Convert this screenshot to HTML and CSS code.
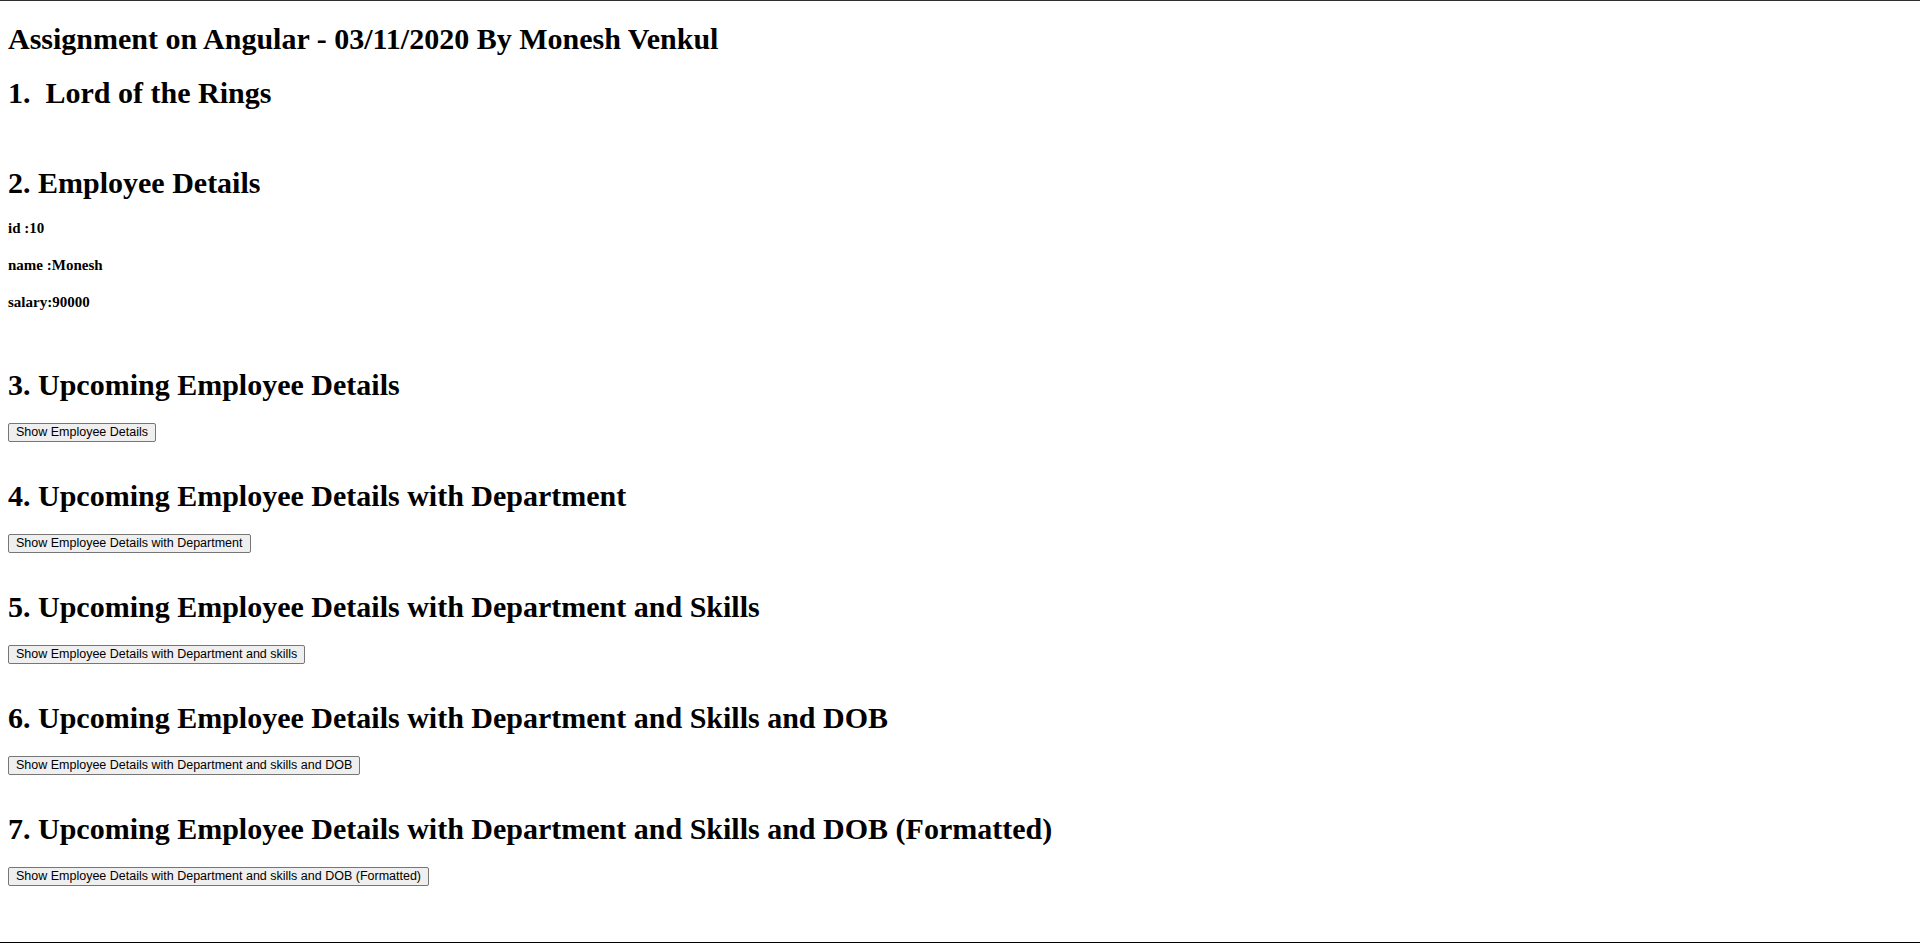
FILE: index.html
```html
<!DOCTYPE html>
<html lang="en">
<head>
<meta charset="utf-8">
<title>Assignment on Angular</title>
<link rel="stylesheet" href="styles.css">
</head>
<body>
<div class="page">
  <h1 class="title">Assignment on Angular - 03/11/2020 By Monesh Venkul</h1>
  <section class="block block-lotr">
    <h2 class="heading">1.&nbsp; Lord of the Rings</h2>
  </section>
  <section class="block block-emp">
    <h2 class="heading">2. Employee Details</h2>
    <div class="fields">
      <p class="field">id :10</p>
      <p class="field">name :Monesh</p>
      <p class="field">salary:90000</p>
    </div>
  </section>
  <section class="block block-first">
    <h2 class="heading">3. Upcoming Employee Details</h2>
    <button class="btn" type="button">Show Employee Details</button>
  </section>
  <section class="block block-next">
    <h2 class="heading">4. Upcoming Employee Details with Department</h2>
    <button class="btn" type="button">Show Employee Details with Department</button>
  </section>
  <section class="block block-next">
    <h2 class="heading">5. Upcoming Employee Details with Department and Skills</h2>
    <button class="btn" type="button">Show Employee Details with Department and skills</button>
  </section>
  <section class="block block-next">
    <h2 class="heading">6. Upcoming Employee Details with Department and Skills and DOB</h2>
    <button class="btn" type="button">Show Employee Details with Department and skills and DOB</button>
  </section>
  <section class="block block-next">
    <h2 class="heading">7. Upcoming Employee Details with Department and Skills and DOB (Formatted)</h2>
    <button class="btn" type="button">Show Employee Details with Department and skills and DOB (Formatted)</button>
  </section>
</div>
</body>
</html>
```

FILE: styles.css
```css
html, body {
  margin: 0;
  padding: 0;
  background: #ffffff;
}

body {
  font-family: "Liberation Serif", "Times New Roman", serif;
  color: #000000;
}

.page {
  box-sizing: border-box;
  min-height: 100vh;
  border-top: 1px solid #2e2e2e;
  border-bottom: 1px solid #000000;
  padding: 0 8px;
  display: flex;
  flex-direction: column;
  align-items: flex-start;
}

.title {
  margin: 21px 0 0 0;
  font-size: 30px;
  line-height: 34px;
  font-weight: bold;
}

.heading {
  margin: 0;
  font-size: 30px;
  line-height: 34px;
  font-weight: bold;
}

.block {
  display: flex;
  flex-direction: column;
  align-items: flex-start;
}

.block-lotr {
  margin-top: 20px;
}

.block-emp {
  margin-top: 56px;
}

.fields {
  display: flex;
  flex-direction: column;
  gap: 20px;
  margin-top: 20px;
}

.field {
  margin: 0;
  font-size: 15px;
  line-height: 17px;
  font-weight: bold;
}

.block-first {
  margin-top: 56.5px;
}

.block-next {
  margin-top: 37.2px;
}

.btn {
  margin-top: 21px;
  font-family: "Liberation Sans", Arial, sans-serif;
  font-size: 12.5px;
  line-height: 15px;
  padding: 1px 7px;
  color: #000000;
  background: #efefef;
  border: 1px solid #767676;
  border-radius: 2px;
}
```
